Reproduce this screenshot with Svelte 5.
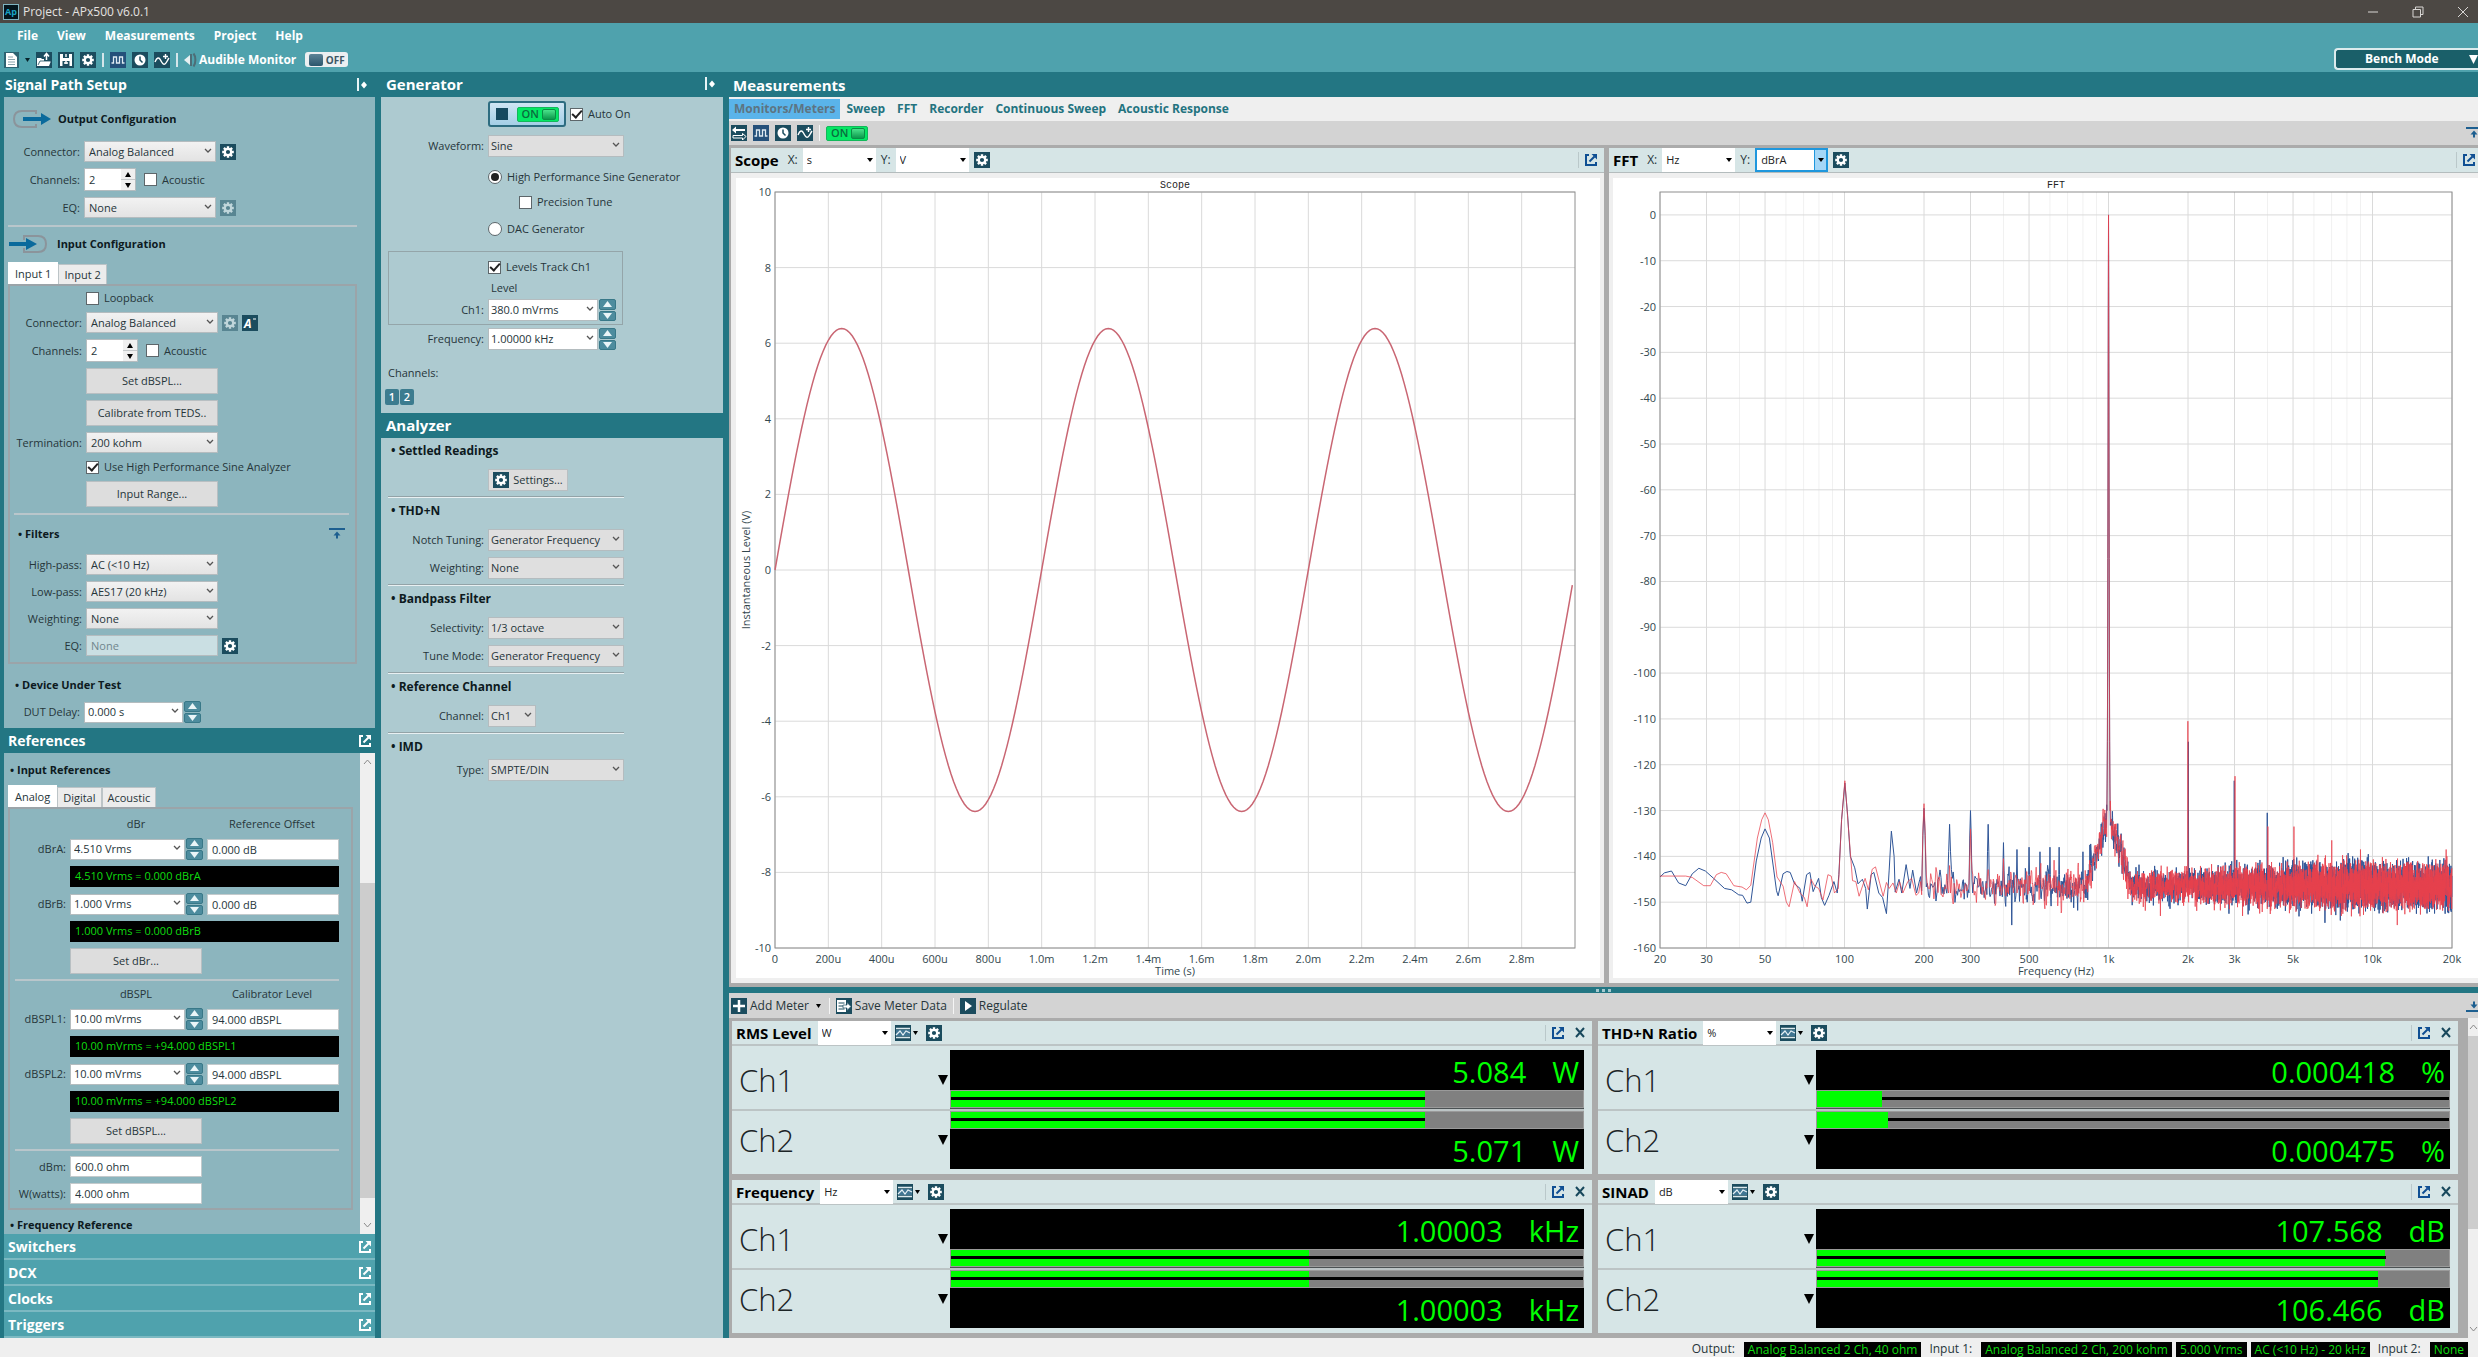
<script lang="ts">
  type Point = [number, number];

  const menus = ["File", "View", "Measurements", "Project", "Help"];
  const tabs = ["Monitors/Meters", "Sweep", "FFT", "Recorder", "Continuous Sweep", "Acoustic Response"];
  const collapsed = ["Switchers", "DCX", "Clocks", "Triggers"];

  const meters = [
    {
      title: "RMS Level", unit: "W",
      rows: [
        { ch: "Ch1", value: "5.084", unit: "W", fill: 75, from: 0, to: 75 },
        { ch: "Ch2", value: "5.071", unit: "W", fill: 75, from: 0, to: 75 },
      ],
    },
    {
      title: "THD+N Ratio", unit: "%",
      rows: [
        { ch: "Ch1", value: "0.000418", unit: "%", fill: 10.3, from: 10.3, to: 100 },
        { ch: "Ch2", value: "0.000475", unit: "%", fill: 11.3, from: 11.3, to: 100 },
      ],
    },
    {
      title: "Frequency", unit: "Hz",
      rows: [
        { ch: "Ch1", value: "1.00003", unit: "kHz", fill: 56.6, from: 0, to: 100 },
        { ch: "Ch2", value: "1.00003", unit: "kHz", fill: 56.6, from: 0, to: 100 },
      ],
    },
    {
      title: "SINAD", unit: "dB",
      rows: [
        { ch: "Ch1", value: "107.568", unit: "dB", fill: 89.8, from: 0, to: 90 },
        { ch: "Ch2", value: "106.466", unit: "dB", fill: 88.8, from: 0, to: 88.8 },
      ],
    },
  ];

  const status = [
    { label: "Output:", chips: ["Analog Balanced 2 Ch, 40 ohm"] },
    { label: "Input 1:", chips: ["Analog Balanced 2 Ch, 200 kohm", "5.000 Vrms", "AC (<10 Hz) - 20 kHz"] },
    { label: "Input 2:", chips: ["None"] },
  ];

  // measured size of each plot, the drawings follow it
  let scopeW = $state(864);
  let scopeH = $state(800);
  let fftW = $state(865);
  let fftH = $state(800);

  const TOP = 14;
  const BOTTOM = 30;

  // ---- scope ----
  const S_LEFT = 39;
  const S_RIGHT = 25;
  const timeTicks = Array.from({ length: 15 }, (_, i) => ({
    t: i * 0.2,
    text: i === 0 ? "0" : i < 5 ? `${i * 200}u` : `${(i * 0.2).toFixed(1)}m`,
  }));
  const voltTicks = Array.from({ length: 11 }, (_, i) => 10 - i * 2);

  const sx = $derived((t: number) => S_LEFT + (t / 3) * (scopeW - S_LEFT - S_RIGHT));
  const sy = $derived((v: number) => TOP + ((10 - v) / 20) * (scopeH - TOP - BOTTOM));

  function toPath(points: Point[], fx: (n: number) => number, fy: (n: number) => number) {
    return "M" + points.map(([a, b]) => `${fx(a).toFixed(2)},${fy(b).toFixed(2)}`).join("L");
  }

  const wave: Point[] = Array.from({ length: 300 }, (_, i) => {
    const t = i / 100;
    return [t, 6.39 * Math.sin(2 * Math.PI * t)];
  });
  const wavePath = $derived(toPath(wave, sx, sy));

  // ---- fft ----
  const F_LEFT = 47;
  const F_RIGHT = 26;
  const freqTicks: [number, string][] = [
    [20, "20"], [30, "30"], [50, "50"], [100, "100"], [200, "200"], [300, "300"], [500, "500"],
    [1000, "1k"], [2000, "2k"], [3000, "3k"], [5000, "5k"], [10000, "10k"], [20000, "20k"],
  ];
  const minorFreqs = [40, 60, 70, 80, 90, 400, 600, 700, 800, 900, 4000, 6000, 7000, 8000, 9000];
  const dbTicks = Array.from({ length: 17 }, (_, i) => -10 * i);

  const fx = $derived((f: number) => F_LEFT + (Math.log10(f / 20) / 3) * (fftW - F_LEFT - F_RIGHT));
  const fy = $derived((db: number) => TOP + ((5 - db) / 165) * (fftH - TOP - BOTTOM));

  // low end of the spectrum, offsets in 1/1448 of the three decades
  const lowBlue: Point[] = [
    [0, -144.5], [8, -143.6], [21, -143.2], [34, -145.8], [47, -146.4], [59, -143.8], [71, -142.6], [83, -143.2],
    [98, -144.8], [118, -147], [131, -147.3], [144, -148.4], [151, -148.5], [159, -150.2], [166, -150], [176, -141],
    [185, -136], [192, -134], [200, -136], [208, -143], [213, -147.5], [216, -148.6], [225, -143.8], [232, -143.3],
    [238, -143.5], [246, -146], [256, -147], [260, -149.8], [268, -144], [274, -143.5], [280, -147.7], [290, -144.8],
    [295, -149], [301, -150.7], [309, -148.5], [318, -145.5], [324, -148], [327, -144], [332, -132], [338, -124],
    [343, -131], [348, -140], [356, -142.5], [362, -146], [370, -145], [376, -147], [379, -151.5], [386, -144],
    [391, -143.5], [400, -148], [407, -149], [414, -152.5], [419, -143], [423, -134.5], [428, -140], [430, -147.8],
    [437, -145], [442, -148], [450, -141.8], [457, -147], [462, -143], [469, -148], [475, -145],
  ];
  const lowRed: Point[] = [
    [0, -144.3], [47, -144.3], [59, -144.6], [80, -146.4], [92, -146.4], [103, -144], [112, -143.5], [121, -143.8],
    [135, -146.4], [150, -146.7], [158, -147.3], [166, -146.3], [178, -136], [186, -132], [192, -130.5], [198, -132],
    [206, -137], [214, -144.5], [225, -146.5], [231, -150], [236, -151], [246, -145.5], [256, -148], [264, -149],
    [269, -151], [276, -145], [283, -146.5], [290, -147], [298, -149.5], [307, -144], [313, -144.3], [319, -148],
    [326, -147], [332, -132], [338, -123.5], [344, -133], [352, -145.3], [358, -145.5], [364, -148.7], [375, -144.8],
    [381, -147.3], [388, -142.8], [394, -142.3], [402, -146], [408, -148.7], [414, -145.7], [419, -147], [426, -145.8],
    [432, -148], [438, -145.5], [444, -148], [453, -145.5], [460, -144.8], [468, -148.5], [473, -148],
  ];
  const blueSpurs: Point[] = [
    [200, -129.5], [250, -133], [300, -130], [350, -133], [400, -137], [430, -155], [450, -138.5], [500, -138],
    [550, -139], [600, -138], [650, -138], [800, -139], [850, -137.5], [2005, -115], [2990, -123.5], [3990, -130.5],
    [6600, -154.5], [8400, -140],
  ];
  const redSpurs: Point[] = [
    [200, -128.5], [250, -142], [300, -134], [400, -140.5], [1570, -153], [1995, -110.5], [3010, -122.5],
    [4010, -133.5], [5030, -133.5], [7000, -136.5], [9000, -138.5], [12400, -155], [19000, -138.5],
  ];
  const tone: Record<number, number> = { 0: 0, 2: -20, 4: -50, 6: -75, 8: -100, 10: -115, 12: -124, 14: -130 };

  function random(seed: number) {
    let s = seed;
    return () => {
      s = (s * 1664525 + 1013904223) % 4294967296;
      return s / 4294967296;
    };
  }

  function spectrum(seed: number, low: Point[], spurs: Point[]): Point[] {
    const rnd = random(seed);
    const points: Point[] = low.map(([o, db]) => [20 * 10 ** ((o * 3) / 1448), db]);
    let side = 1;
    let last = 0;
    let step = 2;
    for (let f = 194; f <= 20000; f += step) {
      step = f < 1200 ? 2 : f * 0.0022;
      side = -side;
      const white = rnd() + rnd() + rnd() + rnd() - 2;
      const skirt = -131 - 180 * Math.abs(Math.log10(f / 1000));
      let db = Math.max(-146.5, skirt);
      if (f < 1200) {
        db += (white + last * 0.5) * 3;
      } else {
        const spread = Math.min(3.4, 0.8 + Math.log10(f / 1000) * 3.2);
        db += side * spread + white * 2.4;
      }
      last = white;
      const spur = spurs.find(([s]) => s > f - step && s <= f);
      const near = spurs.find(([s, level]) => s < 1000 && level > -145 && Math.abs(s - f) <= 3);
      if (spur) db = spur[1];
      else if (near) db = near[1] - 6;
      const off = Math.abs(f - 1000);
      if (tone[off] !== undefined) db = tone[off];
      points.push([f, db]);
    }
    return points;
  }

  const blue = spectrum(7, lowBlue, blueSpurs);
  const red = spectrum(41, lowRed, redSpurs);
  const bluePath = $derived(toPath(blue, fx, fy));
  const redPath = $derived(toPath(red, fx, fy));
</script>

{#snippet gear(dim = false)}
  <svg class="icon" class:dim width="16" height="16" viewBox="0 0 16 16">
    <rect width="16" height="16" fill="#1b4c5e" />
    <path d="M8 2.200v11.600M2.200 8h11.600M3.900 3.900l8.200 8.200M12.100 3.900l-8.200 8.200" stroke="#fff" stroke-width="2.400" />
    <circle cx="8" cy="8" r="3.200" fill="#1b4c5e" stroke="#fff" stroke-width="2.200" />
  </svg>
{/snippet}

{#snippet square()}
  <svg class="icon" width="16" height="16" viewBox="0 0 16 16">
    <rect width="16" height="16" fill="#24507a" />
    <path d="M1.500 11h2V5h3v6h3V5h3v6h2" fill="none" stroke="#dfeaf2" stroke-width="1.300" />
  </svg>
{/snippet}

{#snippet clock()}
  <svg class="icon" width="16" height="16" viewBox="0 0 16 16">
    <rect width="16" height="16" fill="#1b4c5e" />
    <circle cx="8" cy="8" r="5.500" fill="#fff" />
    <path d="M8 4.500V8l2.500 2.500" fill="none" stroke="#1b4c5e" stroke-width="1.500" />
  </svg>
{/snippet}

{#snippet sweep()}
  <svg class="icon" width="16" height="16" viewBox="0 0 16 16">
    <rect width="16" height="16" fill="#1b4c5e" />
    <path d="M1 10c2-5 4-5 5.500-2s3 5 4.500 4 2-3 4-6M9 4.500h5M11.500 2v5" fill="none" stroke="#fff" stroke-width="1.400" />
  </svg>
{/snippet}

{#snippet popout(color = "#0f4f93")}
  <svg width="14" height="14" viewBox="0 0 14 14" fill="none" stroke={color} stroke-width="2">
    <path d="M5 2H2v10h10V9" />
    <path d="M5.500 8.500l5-5" />
    <path d="M7.500 1H13v5.500z" fill={color} stroke="none" />
  </svg>
{/snippet}

{#snippet pin()}
  <svg width="10" height="14" viewBox="0 0 10 14">
    <path d="M1 0v13" stroke="#e8f4f6" stroke-width="2" />
    <path d="M7 3.500l3 3.500-3 3.500L4 7z" fill="#fff" />
  </svg>
{/snippet}

{#snippet raise(flip = false)}
  <svg class:flip width="16" height="12" viewBox="0 0 16 12">
    <path d="M0 1h16" stroke="#1d5f90" stroke-width="2" />
    <path d="M8 3.500l3.500 4h-2.500v3h-2v-3H4.500z" fill="#1d5f90" />
  </svg>
{/snippet}

{#snippet combo(id: string, value: string, kind = "")}
  <span class="combo {kind}">
    <select {id}><option>{value}</option></select>
    {#if !kind.includes("off")}
      <svg width="8" height="6" viewBox="0 0 8 6"><path d="M1 1l3 3 3-3" fill="none" stroke="#555" stroke-width="1.300" /></svg>
    {/if}
  </span>
{/snippet}

{#snippet flat(label: string, value: string, hot = false)}
  <span class="flat" class:hot>
    <select aria-label={label}><option>{value}</option></select>
    <svg width="6" height="4" viewBox="0 0 6 4"><path d="M0 0h6L3 4z" /></svg>
  </span>
{/snippet}

{#snippet nudge()}
  <span class="nudge">
    <button aria-label="Increase"><svg width="9" height="6" viewBox="0 0 9 6"><path d="M0 6l4.500-6L9 6z" fill="#eaf5f8" /></svg></button>
    <button aria-label="Decrease"><svg width="9" height="6" viewBox="0 0 9 6"><path d="M0 0l4.500 6L9 0z" fill="#eaf5f8" /></svg></button>
  </span>
{/snippet}

{#snippet spin(id: string)}
  <span class="spin">
    <input {id} type="text" value="2" />
    <span class="spin-btns">
      <button aria-label="More channels"><svg width="6" height="5" viewBox="0 0 6 5"><path d="M0 5l3-5 3 5z" /></svg></button>
      <button aria-label="Fewer channels"><svg width="6" height="5" viewBox="0 0 6 5"><path d="M0 0l3 5 3-5z" /></svg></button>
    </span>
  </span>
{/snippet}

{#snippet check(text: string, checked = false)}
  <label class="check"><input type="checkbox" {checked} />{text}</label>
{/snippet}

{#snippet refRow(id: string, label: string, value: string, offset: string)}
  <div class="row">
    <label for={id}>{label}</label>
    <span class="valuebox">{@render combo(id, value, "white mid")}{@render nudge()}</span>
    <input class="text" type="text" value={offset} aria-label="{label} offset" />
  </div>
{/snippet}

<div class="app">
  <header class="titlebar">
    <svg width="16" height="16" viewBox="0 0 16 16">
      <rect x="0.500" y="0.500" width="15" height="15" fill="#04151c" stroke="#7fb4c0" />
      <text x="2" y="11" font-size="9" font-weight="700" fill="#19a3c4">Ap</text>
    </svg>
    <span class="grow">Project - APx500 v6.0.1</span>
    <div class="window-btns">
      <button aria-label="Minimize"><svg width="12" height="12" viewBox="0 0 12 12"><path d="M1 6h10" /></svg></button>
      <button aria-label="Restore"><svg width="12" height="12" viewBox="0 0 12 12"><path d="M1 3.500h7.500V11H1zM3.500 3.500V1H11v7.500H8.500" /></svg></button>
      <button aria-label="Close"><svg width="12" height="12" viewBox="0 0 12 12"><path d="M1 1l10 10M11 1L1 11" /></svg></button>
    </div>
  </header>

  <div class="top">
    <div>
      <nav class="menu">
        {#each menus as item}
          <button>{item}</button>
        {/each}
      </nav>
      <div class="tools">
        <button aria-label="New">
          <svg width="15" height="16" viewBox="0 0 15 16"><rect width="15" height="16" fill="#2c6271" /><path d="M2 1h7l4 4v10H2z" fill="#fff" /><path d="M4 5h5M4 7.500h7M4 10h7M4 12.500h7" stroke="#8aa4ad" /></svg>
          <svg width="5" height="4" viewBox="0 0 5 4"><path d="M0 0h5L2.500 4z" fill="#07252c" /></svg>
        </button>
        <button aria-label="Open">
          <svg width="16" height="16" viewBox="0 0 16 16"><rect width="16" height="16" fill="#1b4c5e" /><path d="M1 14V6h4l1 1h2v2h6v1l1-1-2 5z" fill="#fff" /><path d="M2 13l2-4h10" fill="none" stroke="#1b4c5e" stroke-width="0.800" /><path d="M10.500 8V2.500M8 4.500l2.500-3 2.500 3" fill="none" stroke="#fff" stroke-width="1.500" /></svg>
        </button>
        <button aria-label="Save">
          <svg width="16" height="16" viewBox="0 0 16 16"><rect width="16" height="16" fill="#1b4c5e" /><path d="M2 2h12v12H2z" fill="#fff" /><path d="M5 2h6v4H5zM4.500 9h7v5h-7z" fill="#1b4c5e" /><path d="M8 2v3M8 8v4M6 11h4" stroke="#fff" stroke-width="1.400" /></svg>
        </button>
        <button aria-label="Project settings">{@render gear()}</button>
        <i class="bar"></i>
        <button aria-label="Waveforms">{@render square()}</button>
        <button aria-label="Timing">{@render clock()}</button>
        <button aria-label="Add sweep">{@render sweep()}</button>
        <i class="bar"></i>
        <span class="audible" id="audible">
          <svg width="14" height="16" viewBox="0 0 14 16"><path d="M0 8l6-5v10z" fill="#e6eff1" /><path d="M7 2v12M9.500 1.500c2.500 3 2.500 10 0 13" fill="none" stroke="#4d6d77" stroke-width="2" /></svg>
          Audible Monitor
        </span>
        <button class="toggle-off" aria-labelledby="audible"><i></i>OFF</button>
      </div>
    </div>
    <button class="bench"><span>Bench Mode</span><svg width="9" height="9" viewBox="0 0 9 9"><path d="M0 0h9L4.500 9z" fill="#fff" /></svg></button>
  </div>

  <main>
    <div class="left">
      <h2 class="first">Signal Path Setup{@render pin()}</h2>
      <section class="path">
        <h3 class="config">
          <svg width="40" height="18" viewBox="0 0 40 18"><path d="M24 4V1H10q-8 0-8 8t8 8h14v-3" fill="none" stroke="#8b949b" stroke-width="2" /><path d="M11 7h18V3l10 6-10 6v-4H11z" fill="#0a6a9c" /></svg>
          Output Configuration
        </h3>
        <div class="rows">
          <div class="row"><label for="out-con">Connector:</label>{@render combo("out-con", "Analog Balanced")}{@render gear()}</div>
          <div class="row"><label for="out-ch">Channels:</label>{@render spin("out-ch")}{@render check("Acoustic")}</div>
          <div class="row"><label for="out-eq">EQ:</label>{@render combo("out-eq", "None")}{@render gear(true)}</div>
        </div>
        <hr />
        <h3 class="config">
          <svg width="40" height="18" viewBox="0 0 40 18"><path d="M16 5V1h14q8 0 8 8t-8 8H16v-4" fill="none" stroke="#8b949b" stroke-width="2" /><path d="M1 7h17V3l11 6-11 6v-4H1z" fill="#0a6a9c" /></svg>
          Input Configuration
        </h3>
        <div class="tabs"><button class="on">Input 1</button><button>Input 2</button></div>
        <div class="box">
          <div class="row"><span class="lab"></span>{@render check("Loopback")}</div>
          <div class="row">
            <label for="in-con">Connector:</label>{@render combo("in-con", "Analog Balanced")}{@render gear(true)}
            <svg class="icon" width="16" height="16" viewBox="0 0 16 16"><rect width="16" height="16" fill="#1b4c5e" /><text x="2" y="13" font-size="12" font-style="italic" font-weight="700" fill="#fff">A</text><path d="M11 4h3" stroke="#fff" /></svg>
          </div>
          <div class="row"><label for="in-ch">Channels:</label>{@render spin("in-ch")}{@render check("Acoustic")}</div>
          <div class="row"><span class="lab"></span><button class="btn">Set dBSPL...</button></div>
          <div class="row"><span class="lab"></span><button class="btn">Calibrate from TEDS..</button></div>
          <div class="row"><label for="term">Termination:</label>{@render combo("term", "200 kohm")}</div>
          <div class="row"><span class="lab"></span>{@render check("Use High Performance Sine Analyzer", true)}</div>
          <div class="row"><span class="lab"></span><button class="btn">Input Range...</button></div>
          <hr />
          <h3 class="filters">• Filters{@render raise()}</h3>
          <div class="row"><label for="hp">High-pass:</label>{@render combo("hp", "AC (<10 Hz)")}</div>
          <div class="row"><label for="lp">Low-pass:</label>{@render combo("lp", "AES17 (20 kHz)")}</div>
          <div class="row"><label for="wt">Weighting:</label>{@render combo("wt", "None")}</div>
          <div class="row"><label for="eq">EQ:</label>{@render combo("eq", "None", "off")}{@render gear()}</div>
        </div>
        <h3 class="dut">• Device Under Test</h3>
        <div class="row"><label for="dut">DUT Delay:</label><span class="valuebox">{@render combo("dut", "0.000 s", "white short")}{@render nudge()}</span></div>
      </section>

      <h2>References{@render popout("#fff")}</h2>
      <section class="refs">
        <div class="refs-body">
          <h3>• Input References</h3>
          <div class="tabs"><button class="on">Analog</button><button>Digital</button><button>Acoustic</button></div>
          <div class="box">
            <div class="row heads"><span class="lab"></span><span>dBr</span><span>Reference Offset</span></div>
            {@render refRow("dbra", "dBrA:", "4.510 Vrms", "0.000 dB")}
            <div class="row"><span class="lab"></span><output>4.510 Vrms = 0.000 dBrA</output></div>
            {@render refRow("dbrb", "dBrB:", "1.000 Vrms", "0.000 dB")}
            <div class="row"><span class="lab"></span><output>1.000 Vrms = 0.000 dBrB</output></div>
            <div class="row"><span class="lab"></span><button class="btn">Set dBr...</button></div>
            <hr />
            <div class="row heads"><span class="lab"></span><span>dBSPL</span><span>Calibrator Level</span></div>
            {@render refRow("spl1", "dBSPL1:", "10.00 mVrms", "94.000 dBSPL")}
            <div class="row"><span class="lab"></span><output>10.00 mVrms = +94.000 dBSPL1</output></div>
            {@render refRow("spl2", "dBSPL2:", "10.00 mVrms", "94.000 dBSPL")}
            <div class="row"><span class="lab"></span><output>10.00 mVrms = +94.000 dBSPL2</output></div>
            <div class="row"><span class="lab"></span><button class="btn">Set dBSPL...</button></div>
            <hr />
            <div class="row"><label for="dbm">dBm:</label><input id="dbm" class="text" type="text" value="600.0 ohm" /></div>
            <div class="row"><label for="watts">W(watts):</label><input id="watts" class="text" type="text" value="4.000 ohm" /></div>
          </div>
          <h3>• Frequency Reference</h3>
        </div>
        <div class="scroll refs-scroll">
          <svg width="9" height="6" viewBox="0 0 9 6"><path d="M1 5l3.500-4L8 5" /></svg>
          <i></i>
          <svg width="9" height="6" viewBox="0 0 9 6"><path d="M1 1l3.500 4L8 1" /></svg>
        </div>
      </section>
      {#each collapsed as name}
        <h2 class="closed">{name}{@render popout("#fff")}</h2>
      {/each}
    </div>

    <div class="mid-col">
      <h2>Generator{@render pin()}</h2>
      <section class="gen">
        <div class="row">
          <span class="lab"></span>
          <button class="gen-on" aria-label="Generator on"><i></i><span class="toggle-on">ON<b></b></span></button>
          {@render check("Auto On", true)}
        </div>
        <div class="row wave-row"><label for="wave">Waveform:</label>{@render combo("wave", "Sine")}</div>
        <div class="row"><span class="lab"></span><label class="check"><input type="radio" name="gen" checked />High Performance Sine Generator</label></div>
        <div class="row indent"><span class="lab"></span>{@render check("Precision Tune")}</div>
        <div class="row"><span class="lab"></span><label class="check"><input type="radio" name="gen" />DAC Generator</label></div>
        <div class="level">
          <div class="row"><span class="lab"></span>{@render check("Levels Track Ch1", true)}</div>
          <div class="row"><span class="lab"></span><span class="level-text">Level</span></div>
          <div class="row"><label for="lev">Ch1:</label><span class="valuebox">{@render combo("lev", "380.0 mVrms", "white")}{@render nudge()}</span></div>
        </div>
        <div class="row freq-row"><label for="freq">Frequency:</label><span class="valuebox">{@render combo("freq", "1.00000 kHz", "white")}{@render nudge()}</span></div>
        <p>Channels:</p>
        <div class="chans"><button>1</button><button>2</button></div>
      </section>
      <h2>Analyzer</h2>
      <section class="ana">
        <h3>• Settled Readings</h3>
        <div class="row"><span class="lab"></span><button class="btn set">{@render gear()}Settings...</button></div>
        <hr />
        <h3>• THD+N</h3>
        <div class="row"><label for="notch">Notch Tuning:</label>{@render combo("notch", "Generator Frequency")}</div>
        <div class="row"><label for="thdw">Weighting:</label>{@render combo("thdw", "None")}</div>
        <hr />
        <h3>• Bandpass Filter</h3>
        <div class="row"><label for="selec">Selectivity:</label>{@render combo("selec", "1/3 octave")}</div>
        <div class="row"><label for="tune">Tune Mode:</label>{@render combo("tune", "Generator Frequency")}</div>
        <hr />
        <h3>• Reference Channel</h3>
        <div class="row"><label for="refch">Channel:</label>{@render combo("refch", "Ch1", "tiny")}</div>
        <hr />
        <h3>• IMD</h3>
        <div class="row imd"><label for="imd">Type:</label>{@render combo("imd", "SMPTE/DIN")}</div>
      </section>
    </div>

    <div class="right">
      <h2>Measurements</h2>
      <nav class="mtabs">
        {#each tabs as tab, i}
          <button class:on={i === 0}>{tab}</button>
        {/each}
      </nav>
      <div class="mtools">
        <button aria-label="Swap">
          <svg class="icon" width="16" height="16" viewBox="0 0 16 16"><rect width="16" height="16" fill="#1b4c5e" /><path d="M1 5l4-3.500V4h9v2H5v2.500z" fill="#fff" /><path d="M15 11.500L11.500 15v-2H2v-2.500h9.500V8.500z" fill="none" stroke="#fff" /></svg>
        </button>
        <button aria-label="Waveforms">{@render square()}</button>
        <button aria-label="Timing">{@render clock()}</button>
        <button aria-label="Add sweep">{@render sweep()}</button>
        <i class="bar"></i>
        <button class="toggle-on">ON<b></b></button>
        <span class="end">{@render raise()}</span>
      </div>

      <div class="plots">
        <section class="plot-panel">
          <div class="phead">
            <strong>Scope</strong><span>X:</span>{@render flat("Scope X", "s")}<span>Y:</span>{@render flat("Scope Y", "V")}{@render gear()}
            <button class="out" aria-label="Float scope">{@render popout()}</button>
          </div>
          <div class="plot">
            <div class="canvas" bind:clientWidth={scopeW} bind:clientHeight={scopeH}>
              <svg width={scopeW} height={scopeH}>
                {#each timeTicks as tick}
                  <path class="grid" d="M{sx(tick.t)} {sy(10)}V{sy(-10)}" />
                  <text x={sx(tick.t)} y={scopeH - 15} text-anchor="middle">{tick.text}</text>
                {/each}
                {#each voltTicks as v}
                  <path class="grid" d="M{sx(0)} {sy(v)}H{sx(3)}" />
                  <text x={S_LEFT - 4} y={sy(v) + 4} text-anchor="end">{v}</text>
                {/each}
                <rect class="frame" x={sx(0)} y={sy(10)} width={sx(3) - sx(0)} height={sy(-10) - sy(10)} />
                <path d={wavePath} fill="none" stroke="#c96673" stroke-width="1.500" />
                <text class="ptitle" x={(sx(0) + sx(3)) / 2} y="10" text-anchor="middle">Scope</text>
                <text x={(sx(0) + sx(3)) / 2} y={scopeH - 3} text-anchor="middle">Time (s)</text>
                <text transform="translate(14 {sy(0)}) rotate(-90)" text-anchor="middle">Instantaneous Level (V)</text>
              </svg>
            </div>
          </div>
        </section>

        <section class="plot-panel fft">
          <div class="phead">
            <strong>FFT</strong><span>X:</span>{@render flat("FFT X", "Hz")}<span>Y:</span>{@render flat("FFT Y", "dBrA", true)}{@render gear()}
            <button class="out" aria-label="Float FFT">{@render popout()}</button>
          </div>
          <div class="plot">
            <div class="canvas" bind:clientWidth={fftW} bind:clientHeight={fftH}>
              <svg width={fftW} height={fftH}>
                {#each minorFreqs as f}
                  <path class="grid minor" d="M{fx(f)} {fy(5)}V{fy(-160)}" />
                {/each}
                {#each freqTicks as [f, text]}
                  <path class="grid" d="M{fx(f)} {fy(5)}V{fy(-160)}" />
                  <text x={fx(f)} y={fftH - 15} text-anchor="middle">{text}</text>
                {/each}
                {#each dbTicks as db}
                  <path class="grid" d="M{fx(20)} {fy(db)}H{fx(20000)}" />
                  <text x={F_LEFT - 4} y={fy(db) + 4} text-anchor="end">{db}</text>
                {/each}
                <rect class="frame" x={fx(20)} y={fy(5)} width={fx(20000) - fx(20)} height={fy(-160) - fy(5)} />
                <path d={bluePath} fill="none" stroke="#2f5597" stroke-width="1" />
                <path d={redPath} fill="none" stroke="#e8404c" stroke-opacity="0.750" stroke-width="1" />
                <text class="ptitle" x={(fx(20) + fx(20000)) / 2} y="10" text-anchor="middle">FFT</text>
                <text x={(fx(20) + fx(20000)) / 2} y={fftH - 3} text-anchor="middle">Frequency (Hz)</text>
              </svg>
            </div>
          </div>
        </section>
      </div>

      <div class="splitter"><i></i><i></i><i></i></div>

      <div class="mtools meter-tools">
        <button>
          <svg class="icon" width="16" height="16" viewBox="0 0 16 16"><rect width="16" height="16" fill="#1b4c5e" /><path d="M8 2v12M2 8h12" stroke="#fff" stroke-width="2.500" /></svg>
          Add Meter
          <svg class="tri" width="5" height="4" viewBox="0 0 5 4"><path d="M0 0h5L2.500 4z" /></svg>
        </button>
        <i class="bar"></i>
        <button>
          <svg class="icon" width="16" height="16" viewBox="0 0 16 16"><rect width="16" height="16" fill="#1b4c5e" /><path d="M1 2h9v12H1z" fill="#fff" /><path d="M2.500 5h6M2.500 8h5M2.500 11h6" stroke="#1b4c5e" /><path d="M7 7h4V4.500L15 8.500l-4 4V10H7z" fill="#fff" stroke="#1b4c5e" stroke-width="0.700" /></svg>
          Save Meter Data
        </button>
        <i class="bar"></i>
        <button>
          <svg class="icon" width="16" height="16" viewBox="0 0 16 16"><rect width="16" height="16" fill="#1b4c5e" /><path d="M5 3l7 5-7 5z" fill="#fff" /></svg>
          Regulate
        </button>
        <span class="end">{@render raise(true)}</span>
      </div>

      <div class="meters">
        <div class="meter-grid">
          {#each meters as m}
            <section class="meter">
              <div class="phead">
                <strong>{m.title}</strong>{@render flat(m.title + " unit", m.unit)}
                <button class="view" aria-label="Meter view">
                  <svg width="16" height="16" viewBox="0 0 16 16"><rect width="16" height="16" fill="#1b4c5e" /><path d="M1 3.500h14M1 12.500h14" stroke="#dce9ee" stroke-width="1.500" /><rect x="1" y="5" width="14" height="6" fill="#3f7592" /><path d="M1 10l4-4 3 4 3-4 4 2" fill="none" stroke="#e6f1f5" stroke-width="1.200" /></svg>
                  <svg width="5" height="4" viewBox="0 0 5 4"><path d="M0 0h5L2.500 4z" /></svg>
                </button>
                {@render gear()}
                <button class="out" aria-label="Float meter">{@render popout()}</button>
                <button class="close" aria-label="Close meter"><svg width="10" height="11" viewBox="0 0 10 11"><path d="M1 1l8 9M9 1l-8 9" stroke="#17485c" stroke-width="2" /></svg></button>
              </div>
              <div class="mbody">
                {#each m.rows as r, i}
                  <div class="chan" class:second={i === 1}>
                    <span>{r.ch}</span>
                    <button aria-label="{r.ch} options"><svg width="10" height="10" viewBox="0 0 10 10"><path d="M0 0h10L5 10z" /></svg></button>
                  </div>
                  <div class="display" class:second={i === 1}>
                    <div class="value"><span>{r.value}</span><span>{r.unit}</span></div>
                    <div class="track">
                      <i class="fill" style="width: {r.fill}%"></i>
                      <i class="line" style="left: {r.from}%; width: {r.to - r.from}%"></i>
                    </div>
                  </div>
                {/each}
              </div>
            </section>
          {/each}
        </div>
        <div class="scroll meter-scroll">
          <svg width="9" height="6" viewBox="0 0 9 6"><path d="M1 5l3.500-4L8 5" /></svg>
          <i></i>
          <svg width="9" height="6" viewBox="0 0 9 6"><path d="M1 1l3.500 4L8 1" /></svg>
        </div>
      </div>
    </div>
  </main>

  <footer>
    {#each status as group}
      <span class="slabel">{group.label}</span>
      {#each group.chips as chip}
        <span class="chip">{chip}</span>
      {/each}
    {/each}
  </footer>
</div>

<style>
  :global(body) {
    margin: 0;
    background: #237683;
  }

  .app {
    display: flex;
    flex-direction: column;
    height: 100vh;
    overflow: hidden;
    background: #237683;
    color: #26353a;
    font-family: "Open Sans", "Noto Sans", sans-serif;
    font-size: 11px;
    line-height: 16px;
  }

  .app,
  .app :global(*) {
    box-sizing: border-box;
  }

  svg {
    display: block;
    flex: none;
  }

  button {
    display: flex;
    align-items: center;
    justify-content: center;
    padding: 0;
    border: none;
    background: none;
    color: inherit;
    font: inherit;
    white-space: nowrap;
  }

  select,
  input {
    margin: 0;
    color: inherit;
    font: inherit;
  }

  .dim {
    opacity: 0.45;
  }

  .flip {
    transform: rotate(180deg);
  }

  /* Title bar and menus */
  .titlebar {
    display: flex;
    align-items: center;
    flex: none;
    gap: 4px;
    height: 23px;
    padding-left: 3px;
    background: #4c4844;
    color: #e4e2e0;
    font-size: 12px;
  }

  .grow {
    flex: 1;
  }

  .window-btns {
    display: flex;
    gap: 33px;
    padding-right: 9px;
  }

  .window-btns path {
    fill: none;
    stroke: #d8d6d4;
  }

  .top {
    display: flex;
    justify-content: space-between;
    align-items: flex-end;
    flex: none;
    height: 49px;
    background: #4fa2ad;
    color: #fff;
    font-size: 12px;
    font-weight: 700;
  }

  .menu {
    display: flex;
    gap: 19px;
    padding-left: 17px;
    height: 24px;
  }

  .tools {
    display: flex;
    align-items: center;
    gap: 6px;
    height: 23px;
    padding-left: 4px;
    margin-bottom: 1px;
  }

  .tools button:first-child {
    gap: 6px;
  }

  .bar {
    width: 2px;
    height: 14px;
    background: #d5e6ea;
  }

  .audible {
    display: flex;
    align-items: center;
    gap: 1px;
    padding-right: 3px;
  }

  .toggle-off {
    width: 43px;
    height: 15px;
    gap: 3px;
    border-radius: 3px;
    background: #eceff1;
    color: #3c5663;
    font-size: 10px;
  }

  .toggle-off i {
    width: 14px;
    height: 12px;
    border-radius: 2px;
    background: linear-gradient(#5c8396, #2b566c);
  }

  .bench {
    width: 144px;
    height: 22px;
    margin-bottom: 2px;
    justify-content: space-between;
    border: 2px solid #dcebed;
    border-right: none;
    border-radius: 4px 0 0 4px;
    background: #1a5f69;
  }

  .bench span {
    padding-left: 29px;
  }

  /* Columns */
  main {
    display: grid;
    grid-template-columns: 371px 342px 1fr;
    gap: 6px;
    flex: 1;
    min-height: 0;
    padding-left: 4px;
  }

  .left,
  .mid-col,
  .right {
    display: flex;
    flex-direction: column;
    min-width: 0;
    min-height: 0;
  }

  h2 {
    display: flex;
    align-items: center;
    justify-content: space-between;
    flex: none;
    height: 25px;
    margin: 0;
    padding: 1px 3px 0 4px;
    color: #fff;
    font-size: 14px;
    font-weight: 700;
  }

  h2.first {
    padding-right: 8px;
    padding-left: 1px;
  }

  h3 {
    display: flex;
    align-items: center;
    height: 20px;
    margin: 0;
    color: #0d1a1e;
    font-size: 11px;
    font-weight: 700;
  }

  h2.closed {
    height: 26px;
    border-bottom: 2px solid #7cb9c2;
    background: #4fa2ad;
  }

  hr {
    height: 2px;
    margin: 0;
    border: none;
    background: #b9c6cb;
  }

  section.path,
  section.refs {
    background: #8cb5be;
  }

  .path {
    padding: 12px 18px 5px 4px;
  }

  .config {
    gap: 6px;
    padding-left: 4px;
  }

  .path > .rows {
    margin: 12px 0 7px;
  }

  .path > hr + .config {
    margin: 7px 0 8px;
    padding-left: 0;
    gap: 9px;
  }

  .rows,
  .box {
    display: flex;
    flex-direction: column;
    gap: 6px;
  }

  .row {
    display: flex;
    align-items: center;
    gap: 4px;
  }

  .row > label:first-child,
  .lab {
    flex: none;
    width: 72px;
    text-align: right;
    white-space: nowrap;
  }

  .check {
    display: flex;
    align-items: center;
    gap: 5px;
    height: 16px;
    white-space: nowrap;
  }

  .spin + .check {
    margin-left: 4px;
  }

  .check input {
    appearance: none;
    width: 13px;
    height: 13px;
    border: 1px solid #5d666a;
    background: #fff;
    display: grid;
    place-items: center;
  }

  .check input[type="checkbox"]:checked::before {
    content: "";
    width: 8px;
    height: 4px;
    margin-bottom: 3px;
    border: solid #222;
    border-width: 0 0 2px 2px;
    transform: rotate(-48deg);
  }

  .check input[type="radio"] {
    width: 14px;
    height: 14px;
    border-radius: 50%;
  }

  .check input[type="radio"]:checked::before {
    content: "";
    width: 8px;
    height: 8px;
    border-radius: 50%;
    background: #222;
  }

  .combo {
    display: grid;
    align-items: center;
    width: 132px;
    height: 21px;
  }

  .combo > * {
    grid-area: 1 / 1;
  }

  .combo svg {
    justify-self: end;
    margin-right: 4px;
    margin-bottom: 2px;
  }

  .combo select {
    appearance: none;
    width: 100%;
    height: 100%;
    padding: 0 4px;
    border: 1px solid #b4bcbf;
    border-radius: 0;
    background: linear-gradient(#f2f2f2, #e3e3e3);
  }

  .combo.white select {
    padding-left: 3px;
    background: #fff;
  }

  .combo.off select {
    background: #cadfe3;
    color: #70868d;
  }

  .combo.short {
    width: 99px;
  }

  .combo.mid {
    width: 115px;
  }

  .combo.tiny {
    width: 48px;
  }

  .valuebox {
    display: flex;
    align-items: center;
    gap: 1px;
  }

  .nudge {
    display: grid;
    gap: 1px;
    width: 17px;
    height: 22px;
  }

  .nudge button {
    border-radius: 2px;
    background: #4d8c9e;
    border: 1px solid #387888;
  }

  .spin {
    display: flex;
    width: 52px;
    height: 23px;
    border: 1px solid #b4bcbf;
    background: #fff;
  }

  .spin input {
    width: 36px;
    padding: 0 4px;
    border: none;
    background: none;
  }

  .spin-btns {
    display: grid;
    flex: 1;
    gap: 1px;
    background: #c4c8ca;
  }

  .spin-btns button {
    background: #f0f0f0;
  }

  .tabs {
    display: flex;
    align-items: flex-end;
  }

  .tabs button {
    height: 20px;
    padding: 0 5px;
    border: 1px solid #bcc4c7;
    border-bottom: none;
    background: #ececec;
  }

  .tabs button.on {
    height: 22px;
    padding: 0 6px;
    border-color: #fff;
    background: #fff;
  }

  .box {
    border: 2px solid #9ba4a9;
  }

  .path .box {
    padding: 4px 6px 6px 4px;
  }

  .path .box .lab,
  .path .box label:first-child:not(.check) {
    width: 68px;
  }

  .btn {
    width: 132px;
    height: 26px;
    border: 1px solid #b8bfc2;
    background: #dddddd;
  }

  .box .filters {
    justify-content: space-between;
    margin: 3px 0 4px;
    padding: 0 4px;
  }

  .dut {
    margin: 11px 0 6px;
    padding-left: 7px;
  }

  .refs {
    display: flex;
    flex: 1;
    min-height: 0;
    overflow: hidden;
  }

  .refs-body {
    flex: 1;
    overflow: hidden;
    padding: 7px 7px 0 4px;
  }

  .refs-body h3 {
    padding-left: 2px;
  }

  .refs-body .tabs {
    margin-top: 5px;
  }

  .refs-body .box {
    margin-bottom: 5px;
    padding: 7px 12px 4px 5px;
  }

  .refs-body .box hr {
    margin: -1px 0;
  }

  .refs-body .row > label:first-child,
  .refs-body .lab {
    width: 51px;
  }

  .heads span:not(.lab) {
    width: 132px;
    text-align: center;
  }

  input.text {
    width: 132px;
    height: 21px;
    padding: 0 4px;
    border: 1px solid #c3cacc;
    background: #fff;
  }

  output {
    flex: 1;
    height: 21px;
    padding: 2px 5px;
    background: #000;
    color: #0fdc0f;
  }

  .scroll {
    display: flex;
    flex-direction: column;
    align-items: center;
    padding: 6px 0;
    background: #efefef;
  }

  .scroll path {
    fill: none;
    stroke: #8a8a8a;
  }

  .scroll i {
    width: 100%;
    background: #cdcdcd;
  }

  .refs-scroll {
    width: 15px;
  }

  .refs-scroll i {
    flex: 1;
    margin: 118px 0 24px;
  }

  /* Generator and analyzer */
  .mid-col section {
    background: #adcad0;
  }

  .mid-col h2 {
    padding: 0 8px 2px 5px;
    font-size: 15px;
  }

  .gen {
    height: 316px;
    padding: 4px 0 0 7px;
  }

  .ana {
    flex: 1;
    padding: 3px 99px 0 7px;
  }

  .mid-col .lab,
  .mid-col .row > label:first-child {
    width: 96px;
  }

  .mid-col .combo {
    width: 136px;
    height: 22px;
  }

  .mid-col .combo.white {
    width: 110px;
  }

  .mid-col .combo.tiny {
    width: 48px;
  }

  .mid-col .combo:not(.white) select {
    background: #dfdfdf;
  }

  .mid-col .combo select {
    padding-left: 2px;
  }

  .gen-on {
    gap: 9px;
    width: 78px;
    height: 26px;
    border: 2px solid #2d6c80;
    border-radius: 3px;
    background: linear-gradient(#cfe5f3, #a4cfe6);
  }

  .gen-on i {
    width: 12px;
    height: 12px;
    background: #164a60;
  }

  .toggle-on {
    display: flex;
    align-items: center;
    justify-content: space-between;
    width: 42px;
    height: 15px;
    padding: 0 2px 0 4px;
    border-radius: 2px;
    border: 1px solid #13b85a;
    background: #05e765;
    color: #0a6b3e;
    font-size: 11px;
    font-weight: 600;
  }

  .toggle-on b {
    width: 14px;
    height: 11px;
    border-radius: 2px;
    border: 1px solid #0a8d45;
    background: linear-gradient(#4be28b, #0b9a4c);
  }

  .wave-row {
    margin: 8px 0 12px;
  }

  .indent {
    margin: 9px 0 11px;
  }

  .indent .lab {
    margin-right: 31px;
  }

  .level {
    width: 235px;
    height: 74px;
    margin-top: 14px;
    padding: 7px 0 0 0;
    border: 1px solid #94a5a9;
  }

  .mid-col .level .lab,
  .mid-col .level .row > label:first-child {
    width: 95px;
  }

  .level .row + .row {
    margin-top: 5px;
  }

  .level .row:last-child {
    margin-top: 3px;
  }

  .level-text {
    padding-left: 3px;
  }

  .freq-row {
    margin-top: 3px;
  }

  .gen p {
    margin: 15px 0 8px;
  }

  .chans {
    display: flex;
    gap: 1px;
    margin-left: -3px;
  }

  .chans button {
    width: 14px;
    height: 16px;
    border-radius: 2px;
    background: #3c7c8f;
    color: #fff;
    font-weight: 600;
  }

  .ana h3 {
    padding-left: 3px;
    font-size: 12px;
  }

  .ana .row {
    margin-top: 6px;
  }

  .ana h3 + .row {
    margin-top: 8px;
  }

  .ana .row.imd {
    margin-top: 2px;
  }

  .ana hr {
    margin: 5px 0 3px;
    border-top: 1px solid #93a3a7;
    background: #e8f0f2;
  }

  .btn.set {
    width: 80px;
    height: 22px;
    gap: 4px;
  }

  /* Measurements */
  .right > h2 {
    font-size: 15px;
  }

  .mtabs {
    display: flex;
    align-items: center;
    flex: none;
    height: 24px;
    background: #efefef;
    color: #23737f;
    font-size: 12px;
    font-weight: 700;
  }

  .mtabs button {
    height: 20px;
    padding: 0 6px;
  }

  .mtabs .on {
    padding: 0 5px;
    background: #5ab4ea;
    color: #5d7482;
  }

  .mtools {
    display: flex;
    align-items: center;
    flex: none;
    gap: 6px;
    height: 24px;
    padding-left: 2px;
    background: #d3d3d3;
  }

  .mtools .bar {
    width: 1px;
    height: 16px;
    background: #f5f5f5;
  }

  .end {
    margin-left: auto;
    margin-right: -4px;
  }

  .plots {
    display: grid;
    grid-template-columns: 873fr 869fr;
    gap: 5px;
    flex: 1;
    min-height: 0;
    padding: 3px 0 4px 2px;
    background: #ababab;
  }

  .plot-panel {
    display: flex;
    flex-direction: column;
    min-width: 0;
    min-height: 0;
    background: #efefef;
  }

  .phead {
    display: flex;
    align-items: center;
    flex: none;
    gap: 4px;
    height: 25px;
    padding: 0 6px 0 4px;
    background: #d6e5e6;
    border-bottom: 1px solid #b4bcbd;
    font-size: 12px;
  }

  .plot-panel .phead {
    gap: 5px;
  }

  .phead strong {
    margin-right: 2px;
    color: #000;
    font-size: 15px;
  }

  .plot-panel .phead strong {
    margin-right: 4px;
  }

  .fft .phead {
    padding-right: 2px;
  }

  .out {
    margin-left: auto;
    height: 16px;
    padding-left: 5px;
    border-left: 1px solid #bac8ca;
  }

  .close {
    margin: 0 1px 0 6px;
  }

  .flat {
    display: grid;
    align-items: center;
    width: 73px;
    height: 24px;
    background: #fff;
    color: #222;
    font-size: 11px;
  }

  .flat > * {
    grid-area: 1 / 1;
  }

  .flat svg {
    justify-self: end;
    margin-right: 3px;
  }

  .flat select {
    appearance: none;
    width: 100%;
    padding: 0 4px;
    border: none;
    background: none;
  }

  .flat.hot {
    border: 2px solid #1f97dd;
    background: linear-gradient(to right, #fff 57px, #1f97dd 57px, #1f97dd 58px, #a5d7f7 58px);
  }

  .flat.hot svg {
    margin-right: 2px;
  }

  .plot {
    display: flex;
    flex: 1;
    min-height: 0;
    padding: 5px 4px 5px 5px;
  }

  .fft .plot {
    padding-left: 4px;
    padding-right: 0;
  }

  .canvas {
    flex: 1;
    min-width: 0;
    overflow: hidden;
    background: #fff;
  }

  .canvas text {
    fill: #33474e;
    font-size: 11px;
  }

  .canvas .ptitle {
    fill: #222;
    font-family: "Liberation Mono", monospace;
    font-size: 10px;
  }

  .grid {
    stroke: #dadada;
  }

  .grid.minor {
    stroke: #f1f1f1;
  }

  .frame {
    fill: none;
    stroke: #8e8e8e;
  }

  .splitter {
    display: flex;
    align-items: center;
    justify-content: center;
    flex: none;
    gap: 3px;
    height: 6px;
    background: #237683;
  }

  .splitter i {
    width: 3px;
    height: 3px;
    background: #a5c9cf;
  }

  .meter-tools {
    height: 25px;
    gap: 6px;
    font-size: 12px;
  }

  .meter-tools button {
    gap: 3px;
  }

  .meter-tools .tri {
    margin: 0 2px 0 4px;
  }

  .meters {
    display: flex;
    flex: none;
    gap: 10px;
    padding-left: 3px;
    background: #ababab;
  }

  .meter-grid {
    display: grid;
    grid-template-columns: 1fr 1fr;
    gap: 6px;
    flex: 1;
    padding: 3px 0 5px;
  }

  .meter {
    background: #d6e5e6;
  }

  .meter .phead {
    border-bottom: 2px solid #bcc4c5;
  }

  .view {
    gap: 2px;
    margin-right: 4px;
  }

  .mbody {
    display: grid;
    grid-template-columns: 218px 1fr;
    padding: 4px 8px 5px 0;
  }

  .chan {
    display: flex;
    align-items: center;
    justify-content: space-between;
    padding: 0 2px 0 7px;
    color: #1c2426;
    font-size: 31px;
    font-weight: 300;
  }

  .chan.second {
    border-top: 2px solid #bcc4c5;
  }

  .display {
    display: flex;
    flex-direction: column;
    height: 59px;
    border-bottom: 1px solid #4b5153;
    background: #000;
  }

  .display.second {
    flex-direction: column-reverse;
    height: 60px;
    border-top: 2px solid #bcc4c5;
    border-bottom: none;
  }

  .value {
    display: flex;
    align-items: center;
    justify-content: flex-end;
    flex: 1;
    gap: 26px;
    padding: 3px 5px 0 0;
    color: #0f0;
    font-size: 29px;
    font-weight: 400;
  }

  .track {
    position: relative;
    height: 18px;
    border: 1px solid #9a9a9a;
    background: #808080;
  }

  .track i {
    position: absolute;
  }

  .fill {
    inset: 0 auto 0 0;
    background: #0f0;
  }

  .line {
    top: 6px;
    height: 3px;
    background: #000;
  }

  .meter-scroll {
    width: 10px;
  }

  .meter-scroll i {
    height: 193px;
    margin: 6px 0 auto;
  }

  /* Status bar */
  footer {
    display: flex;
    align-items: flex-end;
    justify-content: flex-end;
    flex: none;
    gap: 4px;
    height: 19px;
    padding-right: 10px;
    background: #efefef;
    font-size: 12px;
  }

  .slabel {
    padding: 0 5px 0 4px;
  }

  .chip {
    height: 15px;
    padding: 0 4px;
    background: #000;
    color: #0fdc0f;
    line-height: 15px;
  }
</style>
